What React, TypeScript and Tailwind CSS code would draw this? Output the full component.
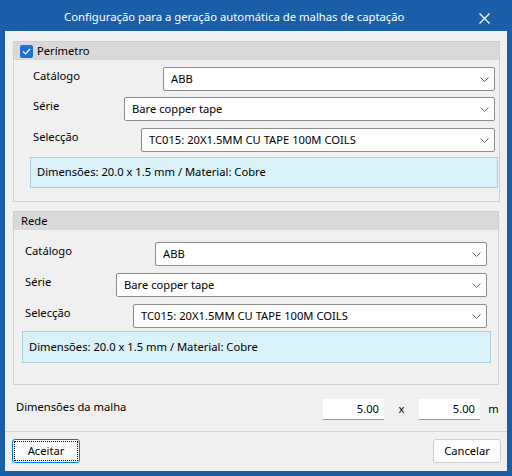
import React from "react";

const font = { fontFamily: '"Segoe UI", "Noto Sans", sans-serif' };

function Chevron() {
	return (
		<svg width="9" height="5" viewBox="0 0 9 5" className="shrink-0">
			<polyline points="0.5,0.5 4.5,4.5 8.5,0.5" fill="none" stroke="#606060" strokeWidth="1" />
		</svg>
	);
}

function Select({ value, w }: { value: string; w: string }) {
	return (
		<div
			className={`${w} h-[24px] bg-white border border-[#8c8c8c] rounded-[2px] flex items-center pl-[7px] pr-[5px]`}
		>
			<span className="flex-1 truncate">{value}</span>
			<Chevron />
		</div>
	);
}

function Row({ label, value, labelW, selW, mt }: { label: string; value: string; labelW: string; selW: string; mt: string }) {
	return (
		<div className={`flex items-start ${mt}`}>
			<div className={`${labelW} pt-[1px] leading-[16px]`}>{label}</div>
			<Select value={value} w={selW} />
		</div>
	);
}

function Info() {
	return <>Dimensões: 20.0 x 1.5 mm / Material: Cobre</>;
}

export default function App() {
	return (
		<div
			className="w-[512px] h-[476px] bg-[#1a5ea8] flex flex-col px-[5px] pb-[5px] text-[11.2px] text-black"
			style={font}
		>
			<div className="h-[31px] flex items-center text-white text-[11.3px] relative">
				<span className="ml-[59px] mt-[4px]">Configuração para a geração automática de malhas de captação</span>
				<svg width="11" height="11" viewBox="0 0 11 11" className="absolute left-[474px] top-[13px]">
					<path d="M0.5 0.5 L10.5 10.5 M10.5 0.5 L0.5 10.5" stroke="white" strokeWidth="1.3" />
				</svg>
			</div>
			<div className="flex-1 bg-[#f0f0f0] flex flex-col">
				<div className="pl-[8px] pr-[7px] pt-[10px] flex flex-col gap-[9px]">
					{/* Perímetro */}
					<div className="h-[161px] border border-[#cfcfcf] flex flex-col">
						<div className="h-[18px] bg-[#d9d9d9] flex items-center pl-[6px] gap-[4px]">
							<div className="w-[13px] h-[13px] rounded-[2px] bg-[#1a73d1] flex items-center justify-center">
								<svg width="9" height="7" viewBox="0 0 9 7">
									<polyline points="1,3.5 3.5,6 8,1" fill="none" stroke="white" strokeWidth="1.2" />
								</svg>
							</div>
							<span>Perímetro</span>
						</div>
						<div className="pl-[19px] flex flex-col">
							<Row label="Catálogo" value="ABB" labelW="w-[130px]" selW="w-[332px]" mt="mt-[7px]" />
							<Row label="Série" value="Bare copper tape" labelW="w-[91px]" selW="w-[371px]" mt="mt-[6px]" />
							<Row label="Selecção" value="TC015: 20X1.5MM CU TAPE 100M COILS" labelW="w-[108px]" selW="w-[354px]" mt="mt-[7px]" />
						</div>
						<div className="ml-[16px] mr-[1px] mt-[5px] h-[31px] bg-[#d9f1f9] border border-[#a9cdd9] flex items-center pl-[6px]">
							<Info />
						</div>
					</div>
					{/* Rede */}
					<div className="h-[174px] border border-[#cfcfcf] flex flex-col mr-[1px]">
						<div className="h-[18px] bg-[#d9d9d9] flex items-center pl-[7px]">
							<span>Rede</span>
						</div>
						<div className="pl-[11px] flex flex-col">
							<Row label="Catálogo" value="ABB" labelW="w-[130px]" selW="w-[332px]" mt="mt-[12px]" />
							<Row label="Série" value="Bare copper tape" labelW="w-[91px]" selW="w-[371px]" mt="mt-[7px]" />
							<Row label="Selecção" value="TC015: 20X1.5MM CU TAPE 100M COILS" labelW="w-[108px]" selW="w-[354px]" mt="mt-[7px]" />
						</div>
						<div className="ml-[8px] mr-[7px] mt-[3px] h-[32px] bg-[#d9f1f9] border border-[#a9cdd9] flex items-center pl-[6px]">
							<Info />
						</div>
					</div>
				</div>
				<div className="flex items-center pl-[11px] mt-[13px] h-[22px]">
					<span className="flex-1 -mt-[4px]">Dimensões da malha</span>
					<div className="w-[61px] h-[21px] bg-white border-b border-[#9a9a9a] text-right pr-[5px] leading-[20px]">5.00</div>
					<span className="w-[35px] text-center">x</span>
					<div className="w-[61px] h-[21px] bg-white border-b border-[#9a9a9a] text-right pr-[5px] leading-[20px]">5.00</div>
					<span className="w-[27px] text-center">m</span>
				</div>
				<div className="mt-[11px] border-t border-[#d5d5d5] flex-1 flex items-start justify-between pl-[7px] pr-[6px] pt-[7px]">
					<div className="w-[68px] h-[24px] rounded-[3px] border border-[#0078d7] bg-[#fdfdfd] p-[1px]">
						<div className="w-full h-full border border-dotted border-black flex items-center justify-center">
							Aceitar
						</div>
					</div>
					<div className="w-[68px] h-[24px] rounded-[3px] border border-[#cccccc] bg-[#fdfdfd] flex items-center justify-center">
						Cancelar
					</div>
				</div>
			</div>
		</div>
	);
}
